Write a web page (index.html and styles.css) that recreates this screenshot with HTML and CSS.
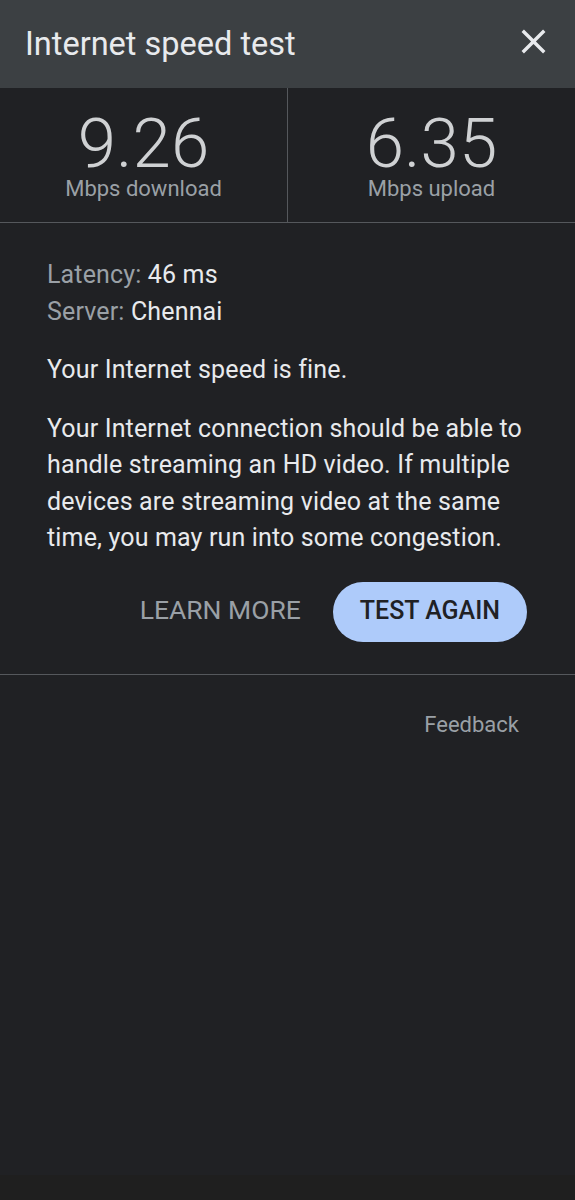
FILE: index.html
```html
<!DOCTYPE html>
<html lang="en">
<head>
    <meta charset="UTF-8">
    <meta name="viewport" content="width=device-width, initial-scale=1.0">
    <title>Internet speed test</title>
    <link rel="stylesheet" href="styles.css">
</head>
<body>
    <div class="page">
        <header class="topbar">
            <h1 class="title">Internet speed test</h1>
            <button class="close" aria-label="Close">
                <svg viewBox="0 0 24 24" width="41" height="41">
                    <path fill="currentColor" d="M19 6.41L17.59 5 12 10.59 6.41 5 5 6.41 10.59 12 5 17.59 6.41 19 12 13.41 17.59 19 19 17.59 13.41 12z"/>
                </svg>
            </button>
        </header>

        <section class="speeds">
            <div class="speed">
                <div class="speed-value">9.26</div>
                <div class="speed-unit">Mbps download</div>
            </div>
            <div class="speed">
                <div class="speed-value">6.35</div>
                <div class="speed-unit">Mbps upload</div>
            </div>
        </section>

        <section class="result">
            <div class="meta">
                <div><span class="label">Latency:</span> 46 ms</div>
                <div><span class="label">Server:</span> Chennai</div>
            </div>
            <p class="verdict">Your Internet speed is fine.</p>
            <p class="desc">Your Internet connection should be able to handle streaming an HD video. If multiple devices are streaming video at the same time, you may run into some congestion.</p>
            <div class="actions">
                <button class="btn-text">LEARN MORE</button>
                <button class="btn-filled">TEST AGAIN</button>
            </div>
        </section>

        <div class="feedback">Feedback</div>

        <div class="spacer"></div>
        <div class="navbar"></div>
    </div>
</body>
</html>
```

FILE: styles.css
```css
* {
    margin: 0;
    padding: 0;
    box-sizing: border-box;
    font-family: Roboto, "Liberation Sans", sans-serif;
}

body {
    background-color: #202124;
    color: #e8eaed;
}

.page {
    display: flex;
    flex-direction: column;
    min-height: 1200px;
}

.topbar {
    height: 88px;
    background-color: #3c4043;
    display: flex;
    align-items: center;
    justify-content: space-between;
    padding: 0 21px 0 25px;
}

.title {
    font-size: 32.5px;
    font-weight: 400;
    color: #e8eaed;
}

.close {
    background: none;
    border: none;
    color: #e8eaed;
    display: flex;
    margin-top: -6px;
}

.speeds {
    display: grid;
    grid-template-columns: 287px 1fr;
    border-bottom: 1px solid #55585c;
}

.speed {
    text-align: center;
    padding: 27px 0 21px;
}

.speed + .speed {
    border-left: 1px solid #55585c;
}

.speed-value {
    font-size: 69px;
    line-height: 58px;
    font-weight: 300;
    color: #cfd1d3;
}

.speed-unit {
    margin-top: 4px;
    font-size: 22px;
    line-height: 24px;
    color: #9aa0a6;
}

.result {
    padding: 33px 46px 32px 47px;
    border-bottom: 1px solid #55585c;
    letter-spacing: 0.15px;
}

.meta {
    font-size: 25px;
    line-height: 37px;
    color: #e8eaed;
}

.meta .label {
    color: #9aa0a6;
}

.verdict {
    font-size: 25px;
    line-height: 36px;
    margin-top: 22px;
}

.desc {
    font-size: 25px;
    line-height: 36.3px;
    margin-top: 23px;
}

.actions {
    display: flex;
    justify-content: flex-end;
    align-items: center;
    gap: 32px;
    margin-top: 26px;
    margin-right: 2px;
}

.btn-text {
    background: none;
    border: none;
    color: #9aa0a6;
    font-size: 26.5px;
    font-weight: 400;
    letter-spacing: 0;
    padding-bottom: 5px;
}

.btn-filled {
    height: 60px;
    padding: 0 27px 3px;
    border: none;
    border-radius: 30px;
    background-color: #aecbfa;
    color: #202124;
    font-size: 25px;
    font-weight: 500;
    letter-spacing: 0;
}

.feedback {
    align-self: flex-end;
    margin: 37px 56px 0 0;
    font-size: 22px;
    line-height: 26px;
    color: #9aa0a6;
}

.spacer {
    flex: 1;
}

.navbar {
    height: 25px;
    background-color: #1f1f1f;
}
```
